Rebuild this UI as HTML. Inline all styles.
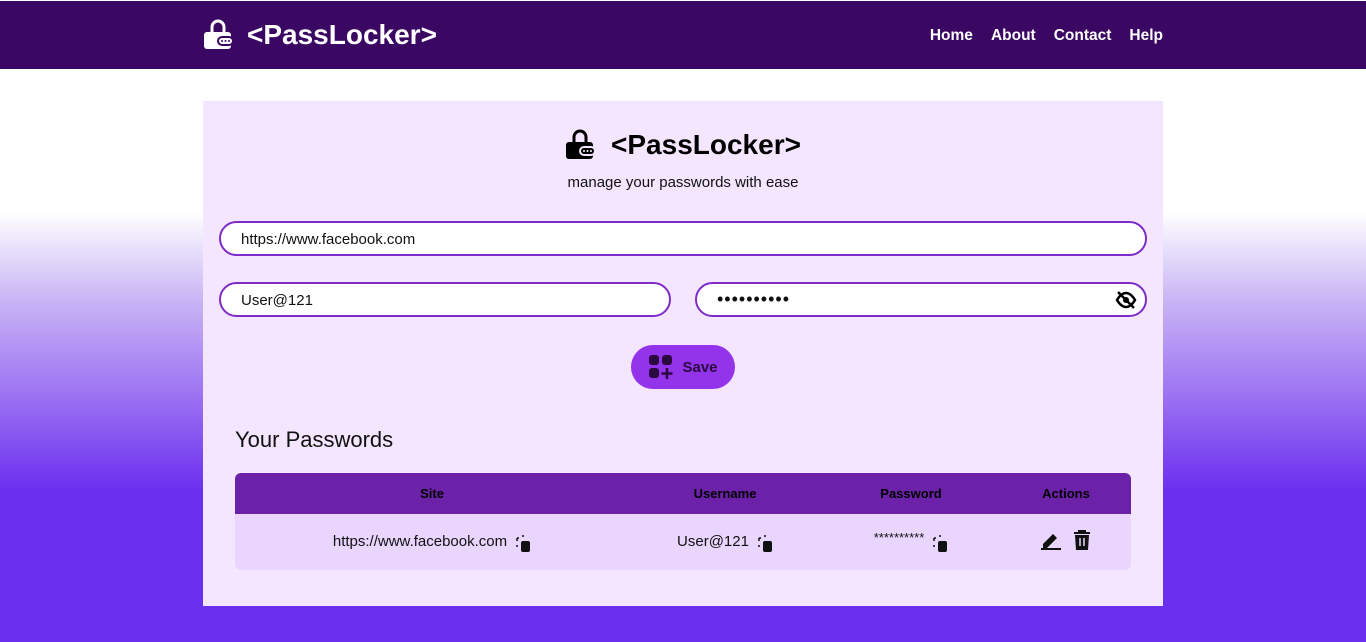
<!DOCTYPE html>
<html><head><meta charset="utf-8"><style>
*{box-sizing:border-box;margin:0;padding:0}
body{width:1366px;height:642px;overflow:hidden;font-family:"Liberation Sans",sans-serif;background:linear-gradient(to bottom,#fff 0,#fff 212px,#c9b5f5 300px,#9a6ff2 400px,#6a30ef 490px,#6a30ef 642px);position:relative}
.nav{position:absolute;top:1px;left:0;width:1366px;height:68px;background:#3a0763;color:#fff}
.nav .logo{position:absolute;left:203px;top:18px;display:flex;align-items:center;font-weight:bold;font-size:28px}
.nav ul{position:absolute;right:203px;top:26px;display:flex;gap:18px;list-style:none;font-weight:bold;font-size:15.5px}
.card{position:absolute;left:203px;top:101px;width:960px;height:505px;background:#f4e6fe}
.title{position:absolute;top:28px;left:0;width:960px;display:flex;justify-content:center;align-items:center;font-weight:bold;font-size:28px;color:#000}
.sub{position:absolute;top:73px;width:960px;text-align:center;font-size:15px;color:#111}
.in{position:absolute;height:35px;border:2px solid #7e2cc9;border-radius:18px;background:#fff;font-size:15px;padding-left:20px;line-height:33px;color:#111}
.save{position:absolute;left:428px;top:244px;width:104px;height:44px;border-radius:22px;background:#9333ea;display:flex;align-items:center;justify-content:center;gap:8px;font-weight:bold;font-size:15px;color:#2a0a40}
h2{position:absolute;left:32px;top:326px;font-size:22px;font-weight:normal;color:#111}
table{position:absolute;left:32px;top:372px;width:896px;border-collapse:collapse;border-radius:6px;overflow:hidden}
th{background:#6b21a8;height:41px;font-size:13px;font-weight:bold;color:#000}
td{background:#e9d5fe;height:56px;font-size:15px;text-align:center;color:#111}
.cp{display:inline-block;vertical-align:middle;margin-left:8px;position:relative;top:2px}
</style></head><body>
<div class="nav">
<div class="logo"><svg width="32" height="32" viewBox="0 0 32 32"><path d="M9 13V8a6 6 0 0 1 12 0v5" stroke="#fff" stroke-width="3" fill="none"/><rect x="1" y="13" width="27" height="17" rx="3" fill="#fff"/><rect x="15" y="18" width="15" height="8" rx="4" fill="#fff" stroke="#3a0763" stroke-width="2"/><circle cx="19" cy="22" r="1" fill="#3a0763"/><circle cx="22.5" cy="22" r="1" fill="#3a0763"/><circle cx="26" cy="22" r="1" fill="#3a0763"/></svg><span style="margin-left:12px">&lt;PassLocker&gt;</span></div>
<ul><li>Home</li><li>About</li><li>Contact</li><li>Help</li></ul>
</div>
<div class="card">
<div class="title"><svg width="32" height="32" viewBox="0 0 32 32"><path d="M9 13V8a6 6 0 0 1 12 0v5" stroke="#000" stroke-width="3" fill="none"/><rect x="1" y="13" width="27" height="17" rx="3" fill="#000"/><rect x="15" y="18" width="15" height="8" rx="4" fill="#000" stroke="#f4e6fe" stroke-width="2"/><circle cx="19" cy="22" r="1" fill="#fff"/><circle cx="22.5" cy="22" r="1" fill="#fff"/><circle cx="26" cy="22" r="1" fill="#fff"/></svg><span style="margin-left:14px">&lt;PassLocker&gt;</span></div>
<div class="sub">manage your passwords with ease</div>
<div class="in" style="left:16px;top:120px;width:928px">https://www.facebook.com</div>
<div class="in" style="left:16px;top:181px;width:452px">User@121</div>
<div class="in" style="left:492px;top:181px;width:452px;font-size:18px;letter-spacing:1px;line-height:31px">••••••••••
<svg style="position:absolute;right:8px;top:6px" width="22" height="20" viewBox="0 0 22 20"><path d="M2 10c3-5 6-7 9-7s6 2 9 7c-3 5-6 7-9 7s-6-2-9-7z" fill="none" stroke="#000" stroke-width="2.5"/><circle cx="11" cy="10" r="3" fill="#000"/><path d="M3 2l16 16" stroke="#000" stroke-width="2.5"/></svg></div>
<div class="save"><svg width="26" height="26" viewBox="0 0 26 26"><rect x="1" y="1" width="10" height="10" rx="3" fill="#2a0a40"/><rect x="14" y="1" width="10" height="10" rx="3" fill="#2a0a40"/><rect x="1" y="14" width="10" height="10" rx="3" fill="#2a0a40"/><path d="M19 14v11M13.5 19.5h11" stroke="#2a0a40" stroke-width="2.5"/></svg>Save</div>
<h2>Your Passwords</h2>
<table><tr><th style="width:394px">Site</th><th style="width:192px">Username</th><th style="width:180px">Password</th><th>Actions</th></tr>
<tr><td>https://www.facebook.com<svg class="cp" width="16" height="18" viewBox="0 0 16 18"><path d="M2 3h2M2 3v3M2 10v2" stroke="#111" stroke-width="1.5" fill="none"/><rect x="6" y="6" width="9" height="11" rx="2" fill="#111"/><path d="M7 1h2" stroke="#111" stroke-width="1.5"/></svg></td>
<td>User@121<svg class="cp" width="16" height="18" viewBox="0 0 16 18"><path d="M2 3h2M2 3v3M2 10v2" stroke="#111" stroke-width="1.5" fill="none"/><rect x="6" y="6" width="9" height="11" rx="2" fill="#111"/><path d="M7 1h2" stroke="#111" stroke-width="1.5"/></svg></td>
<td><span style="font-size:13px;position:relative;top:-4px">**********</span><svg class="cp" width="16" height="18" viewBox="0 0 16 18"><path d="M2 3h2M2 3v3M2 10v2" stroke="#111" stroke-width="1.5" fill="none"/><rect x="6" y="6" width="9" height="11" rx="2" fill="#111"/><path d="M7 1h2" stroke="#111" stroke-width="1.5"/></svg></td>
<td><svg width="22" height="20" viewBox="0 0 22 20" style="vertical-align:middle;position:relative;top:-2px"><path d="M3 14l10-10 4 4-10 10H3z" fill="#111"/><path d="M1 19h20" stroke="#111" stroke-width="2"/></svg><svg width="20" height="22" viewBox="0 0 20 22" style="vertical-align:middle;margin-left:10px;position:relative;top:-2px"><path d="M2 4h16M7 4V2h6v2" stroke="#111" stroke-width="2" fill="none"/><path d="M3 6h14l-1 15H4z" fill="#111"/><path d="M8 9v8M12 9v8" stroke="#e9d5fe" stroke-width="1.5"/></svg></td></tr></table>
</div>
</body></html>
